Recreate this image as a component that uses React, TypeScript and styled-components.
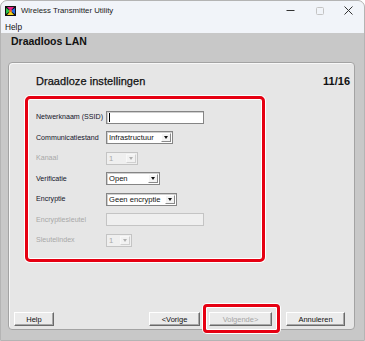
import React from "react";
import styled, { createGlobalStyle, css } from "styled-components";

const Global = createGlobalStyle`
  html, body { margin: 0; padding: 0; background: #ffffff; }
  body { font-family: "Liberation Sans", Arial, sans-serif; }
  * { box-sizing: border-box; }
`;

const Window = styled.div`
  width: 365px;
  height: 341px;
  display: flex;
  flex-direction: column;
  border: 1px solid #b4b4b4;
  border-radius: 7px 7px 0 0;
  overflow: hidden;
  background: #c8c8c8;
`;

const TitleBar = styled.div`
  height: 19px;
  display: flex;
  align-items: center;
  background: #f1f4f9;
  padding-left: 4px;
  padding-right: 1px;
`;

const TitleText = styled.span`
  margin-left: 5px;
  font-size: 7.8px;
  color: #1a1a1a;
  flex: 1;
`;

const Caption = styled.div`
  width: 29px;
  height: 19px;
  display: flex;
  align-items: center;
  justify-content: center;
`;

const MenuBar = styled.div`
  height: 13px;
  display: flex;
  align-items: center;
  background: #f1f4f9;
  padding-left: 4px;
  font-size: 8.3px;
  color: #111;
`;

const Body = styled.div`
  flex: 1;
  display: flex;
  flex-direction: column;
`;

const Header = styled.div`
  height: 29px;
  padding: 2px 0 0 10px;
  font-size: 10.5px;
  font-weight: bold;
  line-height: 12px;
  color: #111;
`;

const Panel = styled.div`
  flex: 1;
  margin: 0 9px 10px 7px;
  border: 1px solid #a3a3a3;
  border-radius: 4px;
  background: #e6e6e6;
  box-shadow: inset 1px 1px 0 #f8f8f8;
  display: flex;
  flex-direction: column;
  padding: 11px 4px 3px 5px;
`;

const PanelHeader = styled.div`
  height: 14px;
  display: flex;
  align-items: center;
  justify-content: space-between;
  padding-left: 22px;
  color: #111;
`;

const PanelTitle = styled.span`
  font-size: 11px;
  letter-spacing: 0.05px;
  -webkit-text-stroke: 0.25px #111;
`;

const PageCount = styled.span`
  font-size: 11px;
  font-weight: bold;
`;

const RedGroup = styled.div`
  margin: 8px 0 0 11px;
  width: 240px;
  height: 166px;
  border: 3px solid #e60012;
  border-radius: 5px;
  box-shadow: 0 0 0 1px #ffffff, inset 0 0 0 1px #ffffff;
  padding: 11px 0 0 8px;
`;

const FormGrid = styled.div`
  display: grid;
  grid-template-columns: 70px auto;
  grid-auto-rows: 14px;
  row-gap: 6.5px;
  align-items: center;
  justify-items: start;
`;

const Label = styled.span<{ $disabled?: boolean }>`
  font-size: 7.1px;
  color: ${(p) => (p.$disabled ? "#a8a8a8" : "#14142a")};
  white-space: nowrap;
`;

const fieldBase = css<{ $disabled?: boolean }>`
  height: 13px;
  border: 1px solid ${(p) => (p.$disabled ? "#c4c4c4" : "#858585")};
  background: ${(p) => (p.$disabled ? "#efefef" : "#ffffff")};
  box-shadow: ${(p) => (p.$disabled ? "none" : "inset 1px 1px 0 #d0d0d0")};
`;

const TextBox = styled.div<{ $width: number; $disabled?: boolean }>`
  ${fieldBase};
  width: ${(p) => p.$width}px;
  position: relative;
  display: flex;
  align-items: center;
  padding-left: 2px;
`;

const Caret = styled.span`
  width: 1px;
  height: 9px;
  background: #000;
`;

const Combo = styled.div<{ $width: number; $disabled?: boolean }>`
  ${fieldBase};
  width: ${(p) => p.$width}px;
  display: flex;
  align-items: stretch;
  font-size: 7.6px;
  color: ${(p) => (p.$disabled ? "#a8a8a8" : "#111")};
`;

const ComboText = styled.span`
  flex: 1;
  display: flex;
  align-items: center;
  padding-left: 2px;
  white-space: nowrap;
  overflow: hidden;
`;

const ComboArrow = styled.span<{ $disabled?: boolean }>`
  width: 10px;
  margin: 1px;
  display: flex;
  align-items: center;
  justify-content: center;
  background: ${(p) => (p.$disabled ? "#f2f2f2" : "#f4f4f4")};
  border: 1px solid;
  border-color: ${(p) =>
    p.$disabled ? "#f8f8f8 #d0d0d0 #d0d0d0 #f8f8f8" : "#ffffff #8a8a8a #8a8a8a #ffffff"};

  &::after {
    content: "";
    border-left: 2.5px solid transparent;
    border-right: 2.5px solid transparent;
    border-top: 3px solid ${(p) => (p.$disabled ? "#b0b0b0" : "#111")};
  }
`;

const Spacer = styled.div`
  flex: 1;
`;

const ButtonRow = styled.div`
  height: 14px;
  display: flex;
  align-items: stretch;
  padding-right: 5px;
`;

const Button = styled.div<{ $width: number; $disabled?: boolean; $gap?: number }>`
  width: ${(p) => p.$width}px;
  margin-left: ${(p) => p.$gap ?? 0}px;
  height: 14px;
  display: flex;
  align-items: center;
  justify-content: center;
  font-size: 7.5px;
  color: ${(p) => (p.$disabled ? "#a6a6a6" : "#111")};
  background: #ebebeb;
  border: 1px solid;
  border-color: #ffffff #6a6a6a #6a6a6a #ffffff;
  box-shadow: inset -1px -1px 0 #a8a8a8;
  position: relative;
`;

const Highlight = styled.span`
  position: absolute;
  left: -7px;
  right: -9px;
  top: -9px;
  bottom: -8px;
  border: 3px solid #e60012;
  border-radius: 4px;
  box-shadow: 0 0 0 1px #ffffff, inset 0 0 0 1px #ffffff;
`;

const AppIcon = () => (
  <svg width="11" height="10" viewBox="0 0 11 10">
    <rect width="11" height="10" fill="#111" />
    <polygon points="2,1 9,1 5.5,5" fill="#e8208a" />
    <polygon points="1,2 1,8 5.5,5" fill="#2cc84a" />
    <polygon points="2,9 9,9 5.5,5" fill="#f2d21c" />
    <polygon points="10,2 10,8 5.5,5" fill="#2a6be0" />
    <polygon points="4,4 7,4 7,6 4,6" fill="#ff6a1a" opacity="0.8" />
  </svg>
);

const MinIcon = () => (
  <svg width="9" height="9" viewBox="0 0 9 9">
    <line x1="0.5" y1="4.5" x2="8.5" y2="4.5" stroke="#333" strokeWidth="1" />
  </svg>
);

const MaxIcon = () => (
  <svg width="8" height="8" viewBox="0 0 8 8">
    <rect x="0.5" y="0.5" width="7" height="7" rx="1" fill="none" stroke="#c4c4c4" strokeWidth="1" />
  </svg>
);

const CloseIcon = () => (
  <svg width="9" height="9" viewBox="0 0 9 9">
    <path d="M0.5 0.5 L8.5 8.5 M8.5 0.5 L0.5 8.5" stroke="#333" strokeWidth="1" />
  </svg>
);

type Row =
  | { label: string; kind: "text"; width: number; disabled?: boolean; caret?: boolean }
  | { label: string; kind: "combo"; width: number; value: string; disabled?: boolean };

const rows: Row[] = [
  { label: "Netwerknaam (SSID)", kind: "text", width: 98, caret: true },
  { label: "Communicatiestand", kind: "combo", width: 67, value: "Infrastructuur" },
  { label: "Kanaal", kind: "combo", width: 32, value: "1", disabled: true },
  { label: "Verificatie", kind: "combo", width: 54, value: "Open" },
  { label: "Encryptie", kind: "combo", width: 71, value: "Geen encryptie" },
  { label: "Encryptiesleutel", kind: "text", width: 98, disabled: true },
  { label: "Sleutelindex", kind: "combo", width: 26, value: "1", disabled: true },
];

export default function App() {
  return (
    <>
      <Global />
      <Window>
        <TitleBar>
          <AppIcon />
          <TitleText>Wireless Transmitter Utility</TitleText>
          <Caption>
            <MinIcon />
          </Caption>
          <Caption>
            <MaxIcon />
          </Caption>
          <Caption>
            <CloseIcon />
          </Caption>
        </TitleBar>
        <MenuBar>Help</MenuBar>
        <Body>
          <Header>Draadloos LAN</Header>
          <Panel>
            <PanelHeader>
              <PanelTitle>Draadloze instellingen</PanelTitle>
              <PageCount>11/16</PageCount>
            </PanelHeader>
            <RedGroup>
              <FormGrid>
                {rows.map((r) => (
                  <React.Fragment key={r.label}>
                    <Label $disabled={r.disabled}>{r.label}</Label>
                    {r.kind === "text" ? (
                      <TextBox $width={r.width} $disabled={r.disabled}>
                        {r.caret && <Caret />}
                      </TextBox>
                    ) : (
                      <Combo $width={r.width} $disabled={r.disabled}>
                        <ComboText>{r.value}</ComboText>
                        <ComboArrow $disabled={r.disabled} />
                      </Combo>
                    )}
                  </React.Fragment>
                ))}
              </FormGrid>
            </RedGroup>
            <Spacer />
            <ButtonRow>
              <Button $width={40}>Help</Button>
              <Spacer />
              <Button $width={51}>&lt;Vorige</Button>
              <Button $width={63} $gap={9} $disabled>
                Volgende&gt;
                <Highlight />
              </Button>
              <Button $width={59} $gap={14}>
                Annuleren
              </Button>
            </ButtonRow>
          </Panel>
        </Body>
      </Window>
    </>
  );
}
